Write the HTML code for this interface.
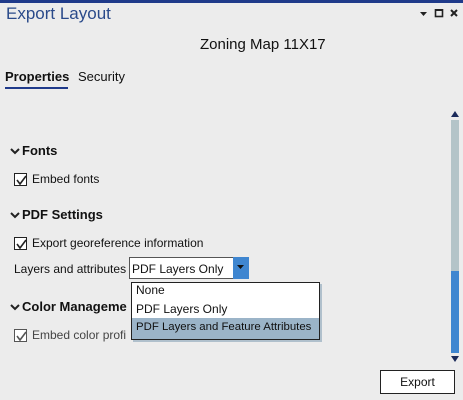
<!DOCTYPE html>
<html><head><style>
*{margin:0;padding:0;box-sizing:border-box}
body{width:463px;height:400px;background:#ececec;font-family:"Liberation Sans",sans-serif;position:relative;overflow:hidden;color:#111}
.a{position:absolute;white-space:nowrap}
.cb{position:absolute;width:13px;height:13px;border:1px solid #222;background:#fff}
.cb svg{position:absolute;left:0;top:0}
.chev{position:absolute;width:10px;height:8px}
</style></head><body>
<div class="a" style="left:0;top:0;width:463px;height:3px;background:#1f3a8a"></div>
<div class="a" style="left:6px;top:4px;font-size:17px;color:#2a4a8a">Export Layout</div>
<svg class="a" style="left:419px;top:9px" width="40" height="10"><path d="M1 3h7l-3.5 4z" fill="#222"/><rect x="16.5" y="0.5" width="7" height="7" fill="none" stroke="#222" stroke-width="1.6"/><rect x="16" y="0" width="8" height="2" fill="#222"/><path d="M32 1l6 6M38 1l-6 6" stroke="#222" stroke-width="2"/></svg>
<div class="a" style="left:200px;top:36px;font-size:15px">Zoning Map 11X17</div>
<div class="a" style="left:5px;top:69px;font-size:13px;font-weight:bold">Properties</div>
<div class="a" style="left:78px;top:69px;font-size:13px">Security</div>
<div class="a" style="left:5px;top:87px;width:63px;height:2px;background:#1f3a8a"></div>

<svg class="chev" style="left:10px;top:148px"><path d="M1 1l4 4 4-4" fill="none" stroke="#222" stroke-width="2"/></svg>
<div class="a" style="left:22px;top:143px;font-size:13px;font-weight:bold">Fonts</div>
<div class="cb" style="left:14px;top:173px"><svg width="13" height="13"><path d="M2 6l3 4 6-8" fill="none" stroke="#222" stroke-width="1.6"/></svg></div>
<div class="a" style="left:32px;top:172px;font-size:12px">Embed fonts</div>

<svg class="chev" style="left:10px;top:212px"><path d="M1 1l4 4 4-4" fill="none" stroke="#222" stroke-width="2"/></svg>
<div class="a" style="left:22px;top:207px;font-size:13px;font-weight:bold">PDF Settings</div>
<div class="cb" style="left:14px;top:237px"><svg width="13" height="13"><path d="M2 6l3 4 6-8" fill="none" stroke="#222" stroke-width="1.6"/></svg></div>
<div class="a" style="left:32px;top:236px;font-size:12px">Export georeference information</div>
<div class="a" style="left:14px;top:262px;font-size:12px">Layers and attributes</div>
<div class="a" style="left:129px;top:257px;width:120px;height:22px;background:#fff;border:1px solid #555"></div>
<div class="a" style="left:132px;top:262px;font-size:12px">PDF Layers Only</div>
<div class="a" style="left:233px;top:257px;width:16px;height:22px;background:#3f86d0"></div>
<svg class="a" style="left:237px;top:265px" width="8" height="5"><path d="M0 0h7l-3.5 4z" fill="#111"/></svg>

<svg class="chev" style="left:10px;top:304px"><path d="M1 1l4 4 4-4" fill="none" stroke="#222" stroke-width="2"/></svg>
<div class="a" style="left:22px;top:299px;font-size:13px;font-weight:bold">Color Manageme</div>
<div class="cb" style="left:14px;top:329px;border-color:#555"><svg width="13" height="13"><path d="M2 6l3 4 6-8" fill="none" stroke="#555" stroke-width="1.6"/></svg></div>
<div class="a" style="left:32px;top:328px;font-size:12px;color:#444">Embed color profi</div>

<div class="a" style="left:131px;top:282px;width:189px;height:58px;background:#fff;border:1px solid #222;box-shadow:2px 2px 0 #b0c0cc"></div>
<div class="a" style="left:136px;top:283px;font-size:12px">None</div>
<div class="a" style="left:136px;top:302px;font-size:12px">PDF Layers Only</div>
<div class="a" style="left:132px;top:318px;width:187px;height:21px;background:#9bb4c8"></div>
<div class="a" style="left:136px;top:321px;font-size:11.4px">PDF Layers and Feature Attributes</div>

<svg class="a" style="left:450px;top:110px" width="10" height="8"><path d="M1 7h8L5 1z" fill="#1a2a5a"/></svg>
<div class="a" style="left:451px;top:120px;width:8px;height:151px;background:#b4c4c8"></div>
<div class="a" style="left:451px;top:271px;width:8px;height:82px;background:#3f86d0"></div>
<svg class="a" style="left:450px;top:355px" width="10" height="8"><path d="M1 1h8L5 7z" fill="#1a2a5a"/></svg>

<div class="a" style="left:380px;top:370px;width:75px;height:24px;background:#fff;border:1px solid #222;display:flex;align-items:center;justify-content:center;font-size:12px">Export</div>
</body></html>
